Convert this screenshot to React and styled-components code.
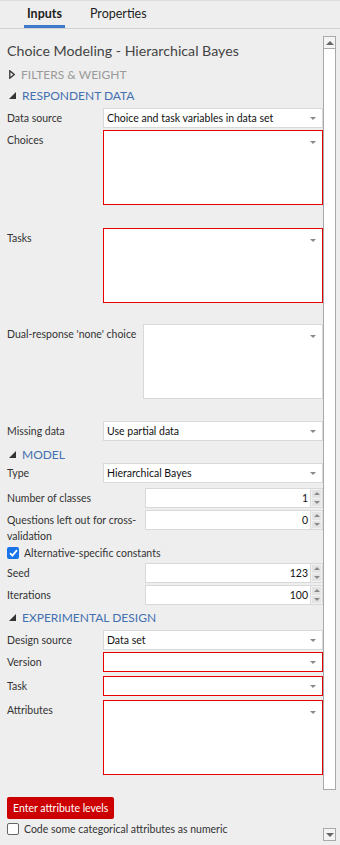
import React from 'react';
import styled, { createGlobalStyle } from 'styled-components';

const GlobalStyle = createGlobalStyle`
    body {
        margin: 0;
        background: #eeeeee;
        font-family: Lato, "Open Sans", "Liberation Sans", sans-serif;
    }
`;

const Page = styled.div`
    width: 340px;
    height: 845px;
    overflow: hidden;
    background: #eeeeee;
`;

const TabBar = styled.div`
    height: 29px;
    box-sizing: border-box;
    border-top: 1px solid #dddddd;
    border-bottom: 1px solid #d2d2d2;
    display: flex;
    padding-left: 24px;
    gap: 22px;
`;

const Tab = styled.div`
    height: 27px;
    box-sizing: border-box;
    padding: 0 3px;
    font-size: 12.5px;
    line-height: 25px;
    color: #1e1e1e;
    font-weight: ${props => props.active ? 700 : 400};
    border-bottom: 3px solid ${props => props.active ? '#3d7ac9' : 'transparent'};
`;

const Body = styled.div`
    display: flex;
`;

const Content = styled.div`
    width: 316px;
    padding: 11px 0 0 7px;
`;

const Title = styled.div`
    font-size: 14.2px;
    line-height: 22px;
    color: #444444;
`;

const Header = styled.div`
    display: flex;
    align-items: center;
    gap: 6px;
    height: 20px;
    box-sizing: border-box;
    padding: ${props => props.pt || 0}px 0 0 2px;
    margin-top: ${props => props.mt || 0}px;
    font-size: 12px;
    color: ${props => props.collapsed ? '#9a9a9a' : '#4470b0'};
`;

const Row = styled.div`
    display: flex;
    align-items: flex-start;
    margin-top: ${props => props.mt === undefined ? 3 : props.mt}px;
`;

const Label = styled.div`
    width: ${props => props.w || 96}px;
    flex-shrink: 0;
    font-size: 10.5px;
    line-height: 16px;
    padding-top: 2px;
    color: #333333;
`;

const Select = styled.div`
    flex: 1;
    height: ${props => props.h || 20}px;
    box-sizing: border-box;
    background: #ffffff;
    border: 1px solid ${props => props.invalid ? '#e60000' : '#d9d9d9'};
    display: flex;
    align-items: ${props => props.list ? 'flex-start' : 'center'};
    justify-content: space-between;
    padding: ${props => props.list ? '10px' : '0'} 6px 0 3px;
    font-size: 10.5px;
    color: #111111;
`;

const Caret = styled.span`
    width: 0;
    height: 0;
    border-left: 3px solid transparent;
    border-right: 3px solid transparent;
    border-top: 3px solid #8a8a8a;
`;

const SpinInput = styled.div`
    flex: 1;
    height: 20px;
    box-sizing: border-box;
    background: #ffffff;
    border: 1px solid #d9d9d9;
    border-right: none;
    font-size: 10.5px;
    line-height: 18px;
    text-align: right;
    padding-right: 2px;
    color: #111111;
`;

const Spinner = styled.div`
    width: 13px;
    height: 20px;
    box-sizing: border-box;
    border: 1px solid #d9d9d9;
    background: #f2f2f2;
    display: flex;
    flex-direction: column;
    gap: 1px;
    padding: 1px;
`;

const SpinButton = styled.div`
    flex: 1;
    background: #e4e4e4;
    display: flex;
    align-items: center;
    justify-content: center;
`;

const Arrow = styled.span`
    width: 0;
    height: 0;
    border-left: 3px solid transparent;
    border-right: 3px solid transparent;
    ${props => props.up
        ? 'border-bottom: 3px solid #8a8a8a;'
        : 'border-top: 3px solid #8a8a8a;'}
`;

const CheckRow = styled.label`
    display: flex;
    align-items: center;
    gap: 5px;
    margin-top: ${props => props.mt || 3}px;
    font-size: 10.5px;
    color: #333333;
    height: 12px;
`;

const Box = styled.span`
    width: 12px;
    height: 12px;
    box-sizing: border-box;
    border-radius: 2px;
    flex-shrink: 0;
    background: ${props => props.checked ? '#1a73e8' : '#ffffff'};
    border: ${props => props.checked ? 'none' : '1.5px solid #666666'};
    display: flex;
    align-items: center;
    justify-content: center;
`;

const RedButton = styled.button`
    display: block;
    margin-top: 22px;
    height: 22px;
    padding: 0 6px;
    border: none;
    border-radius: 2px;
    background: #cc0000;
    color: #ffffff;
    font-family: inherit;
    font-size: 10.5px;
    cursor: pointer;
`;

const ScrollBar = styled.div`
    width: 13px;
    height: 805px;
    margin-top: 7px;
    display: flex;
    flex-direction: column;
    justify-content: space-between;
`;

const ScrollTop = styled.div`
    display: flex;
    flex-direction: column;
`;

const ScrollArrow = styled.div`
    height: 13px;
    box-sizing: border-box;
    border: 1.5px solid #a9a9a9;
    background: #f4f4f4;
    display: flex;
    align-items: center;
    justify-content: center;
`;

const Thumb = styled.div`
    height: 741px;
    box-sizing: border-box;
    border: 1.5px solid #a9a9a9;
    border-top: none;
    background: #ffffff;
`;

const ScrollTri = styled.span`
    width: 0;
    height: 0;
    border-left: 4px solid transparent;
    border-right: 4px solid transparent;
    ${props => props.up
        ? 'border-bottom: 4px solid #666666;'
        : 'border-top: 4px solid #666666;'}
`;

const Triangle = ({open}) => open
    ? <svg width="7" height="7" viewBox="0 0 7 7"><path d="M7 0 L7 7 L0 7 Z" fill="#333"/></svg>
    : <svg width="6" height="9" viewBox="0 0 6 9"><path d="M0.8 0.8 L5.2 4.5 L0.8 8.2 Z" fill="none" stroke="#333" strokeWidth="1.3"/></svg>;

const SelectField = ({label, value, invalid, h, list, mt, w}) =>
    (
        <Row mt={mt}>
            <Label w={w}>{label}</Label>
            <Select invalid={invalid} h={h} list={list}>
                <span>{value}</span>
                <Caret />
            </Select>
        </Row>
    );

const SpinField = ({label, value, mt}) =>
    (
        <Row mt={mt}>
            <Label w={138}>{label}</Label>
            <SpinInput>{value}</SpinInput>
            <Spinner>
                <SpinButton><Arrow up /></SpinButton>
                <SpinButton><Arrow /></SpinButton>
            </Spinner>
        </Row>
    );

const Check = () =>
    (
        <svg width="9" height="8" viewBox="0 0 9 8">
            <path d="M1 4.2 L3.4 6.6 L8 1.2" fill="none" stroke="#fff" strokeWidth="1.8"/>
        </svg>
    );

const App = () =>
    {
        return (
            <Page>
                <GlobalStyle />
                <TabBar>
                    <Tab active>Inputs</Tab>
                    <Tab>Properties</Tab>
                </TabBar>
                <Body>
                    <Content>
                        <Title>Choice Modeling - Hierarchical Bayes</Title>
                        <Header collapsed pt={5}><Triangle />FILTERS &amp; WEIGHT</Header>
                        <Header mt={1} pt={5}><Triangle open />RESPONDENT DATA</Header>

                        <SelectField label="Data source" value="Choice and task variables in data set" mt={5} />
                        <SelectField label="Choices" invalid list h={75} mt={2} />
                        <SelectField label="Tasks" invalid list h={75} mt={23} />
                        <SelectField label="Dual-response 'none' choice" list h={75} mt={21} w={136} />
                        <SelectField label="Missing data" value="Use partial data" mt={22} />

                        <Header pt={7}><Triangle open />MODEL</Header>
                        <SelectField label="Type" value="Hierarchical Bayes" mt={2} />
                        <SpinField label="Number of classes" value="1" mt={5} />
                        <SpinField label="Questions left out for cross-validation" value="0" mt={2} />
                        <CheckRow mt={3}><Box checked><Check /></Box>Alternative-specific constants</CheckRow>
                        <SpinField label="Seed" value="123" mt={4} />
                        <SpinField label="Iterations" value="100" mt={2} />

                        <Header pt={5}><Triangle open />EXPERIMENTAL DESIGN</Header>
                        <SelectField label="Design source" value="Data set" mt={5} />
                        <SelectField label="Version" invalid mt={2} />
                        <SelectField label="Task" invalid mt={4} />
                        <SelectField label="Attributes" invalid list h={75} mt={4} />

                        <RedButton>Enter attribute levels</RedButton>
                        <CheckRow mt={4}><Box />Code some categorical attributes as numeric</CheckRow>
                    </Content>
                    <ScrollBar>
                        <ScrollTop>
                            <ScrollArrow><ScrollTri up /></ScrollArrow>
                            <Thumb />
                        </ScrollTop>
                        <ScrollArrow><ScrollTri /></ScrollArrow>
                    </ScrollBar>
                </Body>
            </Page>
        );
    }

export default App
